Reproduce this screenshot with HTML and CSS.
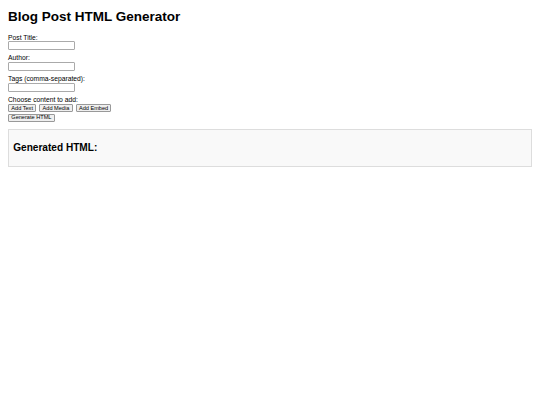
FILE: index.html
```html
<!DOCTYPE html>
<html lang="en">
<head>
<meta charset="utf-8">
<title>Blog Post HTML Generator</title>
<link rel="stylesheet" href="styles.css">
</head>
<body>
<h1 class="title">Blog Post HTML Generator</h1>
<div class="group">
  <label class="label" for="title">Post Title:</label>
  <input class="field" id="title" type="text">
</div>
<div class="group">
  <label class="label" for="author">Author:</label>
  <input class="field" id="author" type="text">
</div>
<div class="group">
  <label class="label" for="tags">Tags (comma-separated):</label>
  <input class="field" id="tags" type="text">
</div>
<div class="choose">
  <div class="label">Choose content to add:</div>
  <div class="btn-row">
    <button class="btn" type="button">Add Text</button>
    <button class="btn" type="button">Add Media</button>
    <button class="btn" type="button">Add Embed</button>
  </div>
  <div class="btn-row">
    <button class="btn" type="button">Generate HTML</button>
  </div>
</div>
<div class="output">
  <h2 class="output-title">Generated HTML:</h2>
</div>
</body>
</html>
```
FILE: styles.css
```css
html, body {
  background: #fff;
}
body {
  margin: 0;
  padding: 0 8px;
  font-family: "Liberation Sans", Arial, sans-serif;
  font-size: 6.75px;
  color: #000;
}
.title {
  font-size: 13.5px;
  font-weight: bold;
  margin: 0;
  padding: 9px 0;
  line-height: 15.5px;
}
.group {
  margin-bottom: 4.2px;
}
.label {
  display: block;
  line-height: 7.8px;
}
.field {
  display: block;
  box-sizing: border-box;
  width: 67px;
  height: 9px;
  margin: 0;
  padding: 0;
  border: 1px solid #aaa;
  border-radius: 1px;
  background: #fff;
}
.choose {
  margin-bottom: 7px;
}
.btn-row {
  display: flex;
  gap: 3px;
  margin-bottom: 1.7px;
}
.btn {
  box-sizing: border-box;
  height: 7.8px;
  padding: 0 2.3px;
  margin: 0;
  font-family: "Liberation Sans", Arial, sans-serif;
  font-size: 5.6px;
  line-height: 5px;
  color: #000;
  background: #efefef;
  border: 1px solid #999;
  border-radius: 1px;
}
.output {
  background: #f9f9f9;
  border: 1px solid #ddd;
  padding: 4.2px;
}
.output-title {
  font-size: 10.1px;
  font-weight: bold;
  margin: 0;
  padding: 8.4px 0;
  line-height: 11.6px;
}
```
